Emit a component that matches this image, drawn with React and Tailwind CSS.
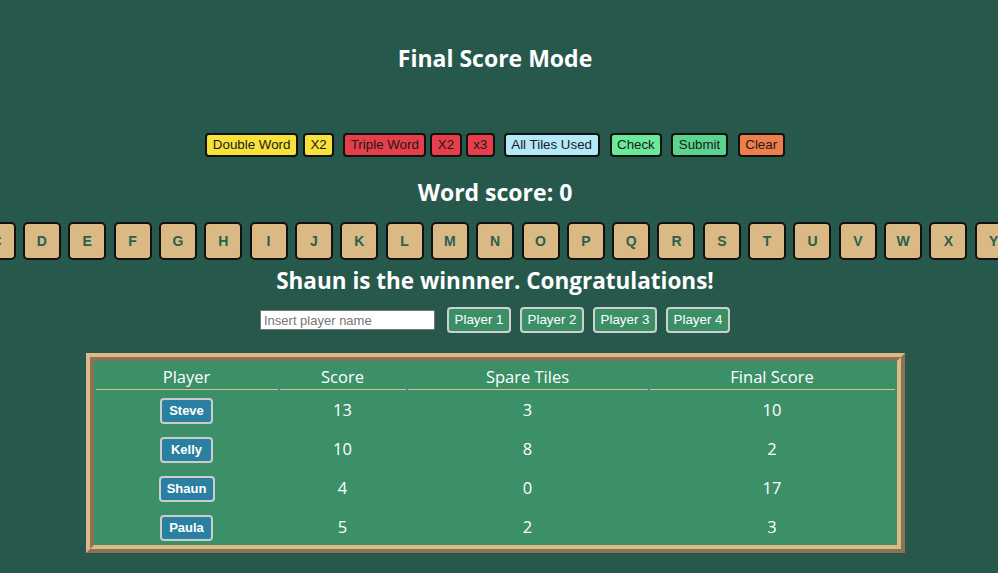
import React from "react";

const letters = "ABCDEFGHIJKLMNOPQRSTUVWXYZ".split("");

const players = [
  { name: "Steve", score: 13, spare: 3, final: 10, w: "w-[53px]" },
  { name: "Kelly", score: 10, spare: 8, final: 2, w: "w-[53px]" },
  { name: "Shaun", score: 4, spare: 0, final: 17, w: "w-[56px]" },
  { name: "Paula", score: 5, spare: 2, final: 3, w: "w-[53px]" },
];

function Btn({ className, children }) {
  return (
    <button
      className={
        "h-[24px] px-[5.5px] border-2 border-[#111] rounded-[4px] text-[13.33px] text-[#1a1a1a] leading-none " +
        className
      }
    >
      {children}
    </button>
  );
}

function App() {
  return (
    <div className="min-h-[573px] w-full bg-[#26594c] overflow-hidden font-['Liberation_Sans',Arial,sans-serif]">
      <div className="w-[990px] flex flex-col items-center">
        <h1 className="mt-[43px] h-[30px] text-[23px] font-bold text-white leading-[30px] font-['Open_Sans',sans-serif]">
          Final Score Mode
        </h1>

        <div className="mt-[60px] flex items-center">
          <Btn className="bg-[#f6e23b]">Double Word</Btn>
          <Btn className="bg-[#f6e23b] ml-[5px]">X2</Btn>
          <Btn className="bg-[#e63e4b] ml-[9px]">Triple Word</Btn>
          <Btn className="bg-[#e63e4b] ml-[4px]">X2</Btn>
          <Btn className="bg-[#e63e4b] ml-[4px]">x3</Btn>
          <Btn className="bg-[#b3e9f9] ml-[9px]">All Tiles Used</Btn>
          <Btn className="bg-[#6ae89c] ml-[10px]">Check</Btn>
          <Btn className="bg-[#5ad58f] ml-[9px]">Submit</Btn>
          <Btn className="bg-[#ee7e4c] ml-[10px]">Clear</Btn>
        </div>

        <h2 className="mt-[20px] h-[30px] leading-[30px] text-[23px] font-bold text-white font-['Open_Sans',sans-serif]">
          Word score: 0
        </h2>

        {/* tile rack is wider than the window, it spills over both edges */}
        <div className="mt-[15px] self-stretch pr-[45px] flex justify-center gap-[7.33px]">
          {letters.map((l) => (
            <div
              key={l}
              className="shrink-0 w-[38px] h-[38px] bg-[#dbb984] border-2 border-[#111] rounded-[5px] flex items-center justify-center text-[14px] font-bold text-[#28604f]"
            >
              {l}
            </div>
          ))}
        </div>

        <h2 className="mt-[6px] h-[30px] leading-[30px] text-[22.5px] font-bold text-white font-['Open_Sans',sans-serif]">
          Shaun is the winnner. Congratulations!
        </h2>

        <div className="mt-[11px] flex items-center">
          <input
            placeholder="Insert player name"
            className="w-[175px] h-[20px] bg-white border border-[#767676] px-[3px] text-[13px] text-black placeholder:text-[#757575] outline-none"
          />
          {["Player 1", "Player 2", "Player 3", "Player 4"].map((p, i) => (
            <button
              key={p}
              className={
                "w-[64px] h-[26px] bg-[#3b8f66] border-2 border-[#cfcfcf] rounded-[4px] text-white text-[13.33px] leading-none " +
                (i === 0 ? "ml-[12px]" : "ml-[9px]")
              }
            >
              {p}
            </button>
          ))}
        </div>

        <div className="mt-[20px] w-[819px] h-[200px] bg-[#3b9068] border-[8px] border-[#deb887] [border-style:ridge] font-['Open_Sans',sans-serif] text-white">
          <table className="w-full border-separate border-spacing-[2px]">
            <thead>
              <tr className="h-[27px]">
                <th className="w-[182px] font-normal text-[16.5px] border-b border-[#d6c38c] align-bottom leading-[24px]">Player</th>
                <th className="w-[126px] font-normal text-[16.5px] border-b border-[#d6c38c] align-bottom leading-[24px]">Score</th>
                <th className="w-[240px] font-normal text-[16.5px] border-b border-[#d6c38c] align-bottom leading-[24px]">Spare Tiles</th>
                <th className="font-normal text-[16.5px] border-b border-[#d6c38c] align-bottom leading-[24px]">Final Score</th>
              </tr>
            </thead>
            <tbody>
              {players.map((p) => (
                <tr key={p.name} className="h-[37px] text-[16.5px] text-center">
                  <td>
                    <button
                      className={
                        p.w +
                        " h-[26px] bg-[#2a80a0] border-2 border-[#cccccc] rounded-[4px] text-white text-[13px] font-bold leading-none font-['Liberation_Sans',Arial,sans-serif]"
                      }
                    >
                      {p.name}
                    </button>
                  </td>
                  <td>{p.score}</td>
                  <td>{p.spare}</td>
                  <td>{p.final}</td>
                </tr>
              ))}
            </tbody>
          </table>
        </div>
      </div>
    </div>
  );
}

export default App;
